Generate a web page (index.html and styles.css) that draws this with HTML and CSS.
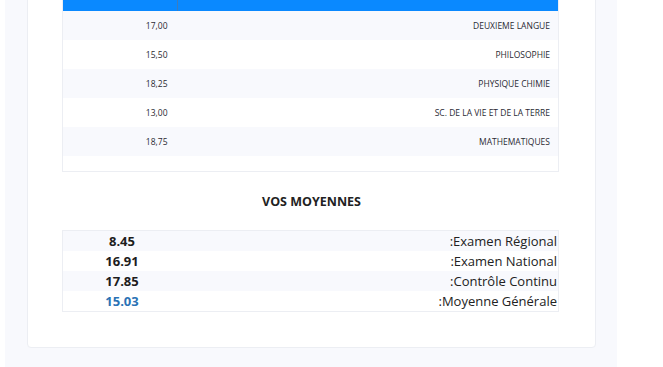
FILE: index.html
```html
<!DOCTYPE html>
<html lang="fr">
<head>
<meta charset="utf-8">
<title>Notes</title>
<link rel="stylesheet" href="styles.css">
</head>
<body>
<div class="page">
  <div class="card">
    <table class="notes">
      <thead>
        <tr><th class="c1"></th><th class="c2"></th></tr>
      </thead>
      <tbody>
        <tr><td class="c1">17,00</td><td class="c2">DEUXIEME LANGUE</td></tr>
        <tr><td class="c1">15,50</td><td class="c2">PHILOSOPHIE</td></tr>
        <tr><td class="c1">18,25</td><td class="c2">PHYSIQUE CHIMIE</td></tr>
        <tr><td class="c1">13,00</td><td class="c2">SC. DE LA VIE ET DE LA TERRE</td></tr>
        <tr><td class="c1">18,75</td><td class="c2">MATHEMATIQUES</td></tr>
        <tr class="empty"><td></td><td></td></tr>
      </tbody>
    </table>

    <h3 class="title">VOS MOYENNES</h3>

    <table class="moy">
      <tr><td class="val">8.45</td><td class="lab">:Examen Régional</td></tr>
      <tr><td class="val">16.91</td><td class="lab">:Examen National</td></tr>
      <tr><td class="val">17.85</td><td class="lab">:Contrôle Continu</td></tr>
      <tr><td class="val blue">15.03</td><td class="lab">:Moyenne Générale</td></tr>
    </table>
  </div>
</div>
</body>
</html>
```

FILE: styles.css
```css
html, body {
  margin: 0;
  padding: 0;
  background: #ffffff;
  font-family: "Open Sans", "Noto Sans", sans-serif;
  color: #212529;
  overflow: hidden;
}

.page {
  width: 612px;
  margin-left: 5px;
  margin-top: -61px;
  background: #f8f9fd;
  padding: 20px 21px 20px 22px;
  box-sizing: border-box;
  height: 428px;
}

.card {
  background: #ffffff;
  border: 1px solid #eceef3;
  border-radius: 4px;
  padding: 20px 34px 35px 34px;
}

.notes {
  width: 497px;
  border-collapse: collapse;
  border: 1px solid #eceef3;
  font-size: 8.5px;
  color: #2a2a33;
}

.notes thead th {
  background: #0a89ff;
  height: 30px;
  padding: 0;
}

.notes th.c1 {
  width: 114px;
  border-right: 1px solid #3f7cbc;
}

.notes td {
  height: 29px;
  padding: 0 8px 0 0;
  text-align: right;
  vertical-align: middle;
}

.notes td.c1 {
  padding-right: 10px;
}

.notes tbody tr:nth-child(odd) {
  background: #f8f9fd;
}

.notes tbody tr.empty td {
  height: 15px;
  background: #ffffff;
}

.title {
  margin: 0;
  padding: 20px 0 18px;
  text-align: center;
  font-size: 12.5px;
  font-weight: 700;
  color: #222222;
  line-height: 20px;
}

.moy {
  width: 497px;
  border-collapse: collapse;
  border: 1px solid #eceef3;
  font-size: 13px;
}

.moy tr:nth-child(odd) {
  background: #f8f9fd;
}

.moy td {
  height: 20px;
  padding: 0;
  line-height: 18px;
}

.moy td.val {
  width: 118px;
  text-align: center;
  font-weight: 700;
  color: #1d1d1d;
}

.moy td.val.blue {
  color: #2a72b5;
}

.moy td.lab {
  text-align: right;
  padding-right: 1px;
  color: #222222;
}
```
